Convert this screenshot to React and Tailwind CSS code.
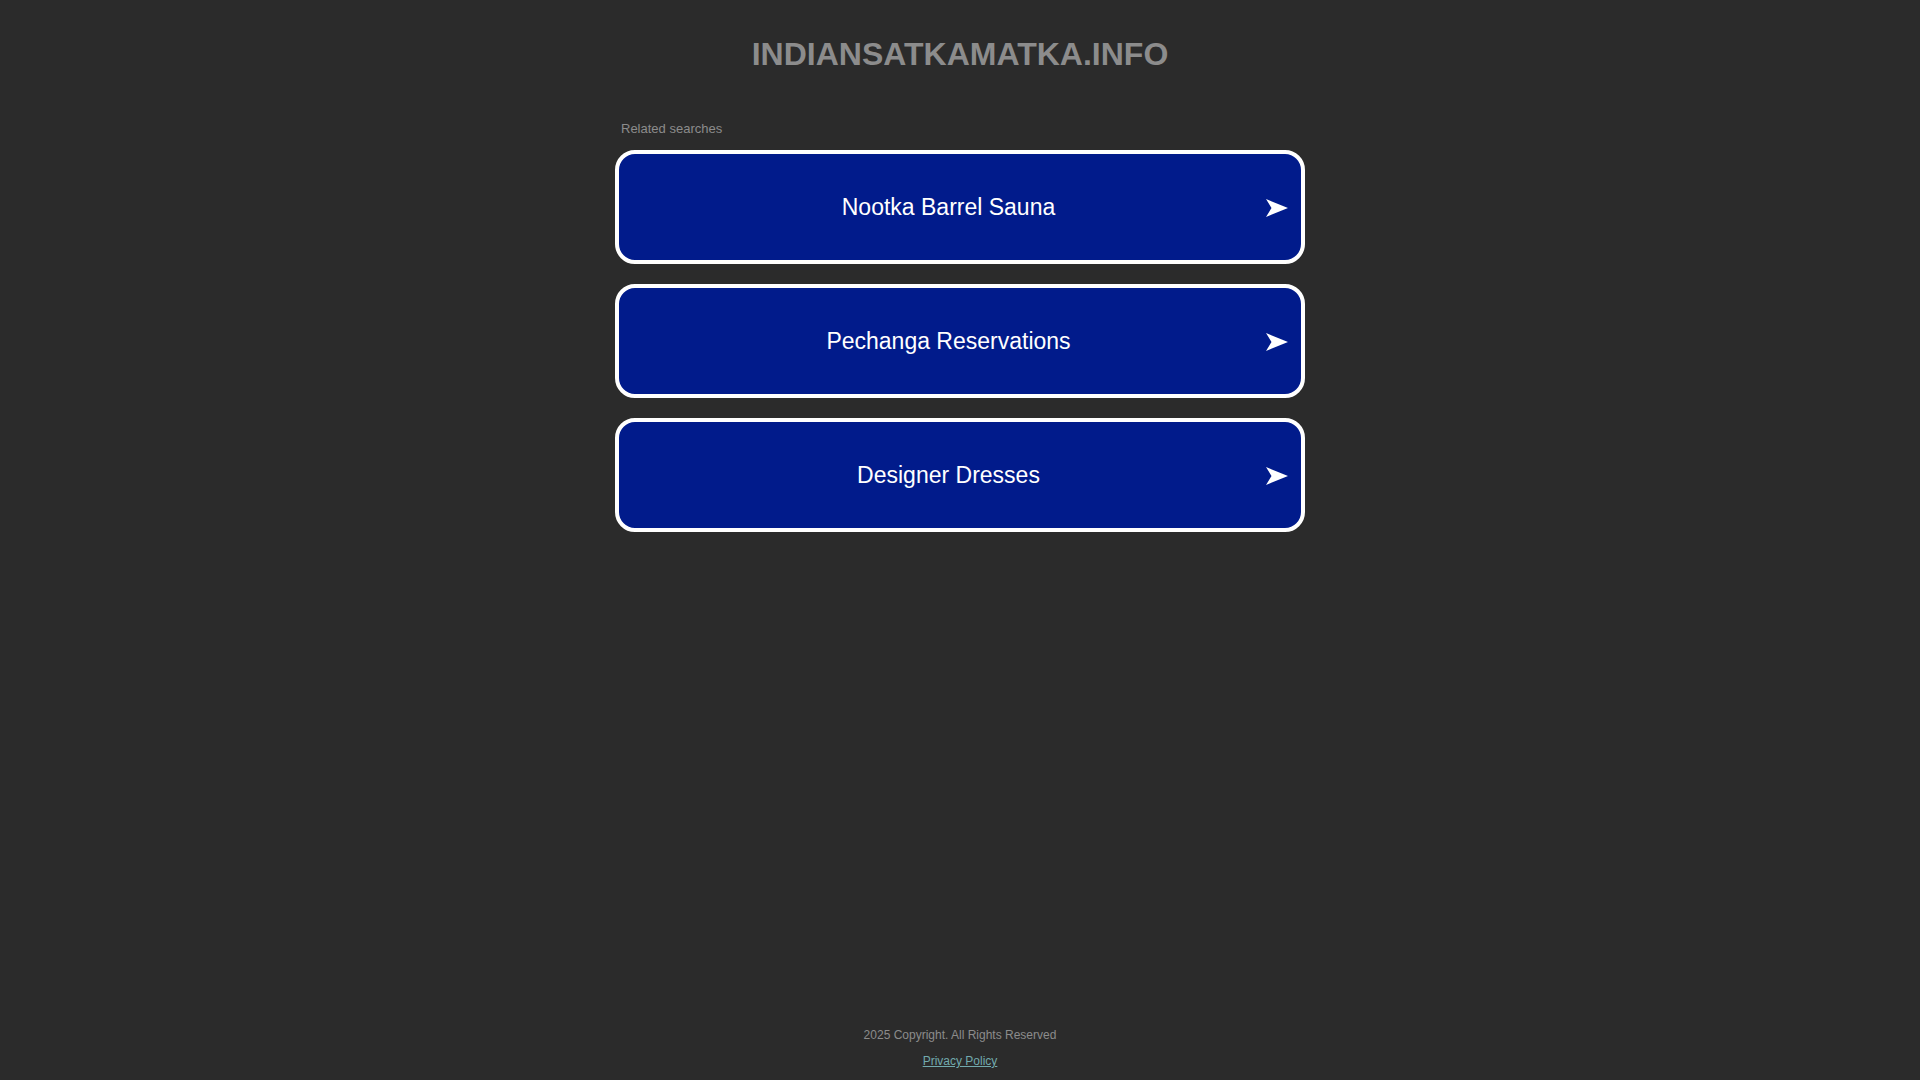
const searches = ['Nootka Barrel Sauna', 'Pechanga Reservations', 'Designer Dresses'];

function Arrow() {
  return (
    <svg className="h-[18px] w-[22px] shrink-0" viewBox="0 0 22 18" fill="#ffffff">
      <path d="M0 0 L22 9 L0 18 L5.5 9 Z" />
    </svg>
  );
}

export default function App() {
  return (
    <div
      className="flex min-h-screen flex-col bg-[#2b2b2b] text-[#8c8c8c]"
      style={{ fontFamily: '"Liberation Sans", Arial, sans-serif' }}
    >
      <header className="pt-[30px] text-center">
        <h1 className="text-[32px] font-bold leading-normal text-[#8c8c8c]">INDIANSATKAMATKA.INFO</h1>
      </header>

      <main className="mx-auto mt-[41px] w-[690px]">
        <p className="pl-[6px] text-[13px] leading-normal text-[#8c8c8c]">Related searches</p>
        <div className="mt-[11px] flex flex-col gap-[20px]">
          {searches.map((s) => (
            <a
              key={s}
              href="#"
              className="flex h-[114px] items-center rounded-[20px] border-4 border-white bg-[#011b8b] pl-[12px] pr-[13px] pt-[2px] text-white"
            >
              <span className="flex-1 text-center text-[23px] leading-normal">{s}</span>
              <Arrow />
            </a>
          ))}
        </div>
      </main>

      <footer className="mt-auto pb-[10px] text-center text-[12px] leading-normal">
        <p className="text-[#8c8c8c]">2025 Copyright. All Rights Reserved</p>
        <a href="#" className="mt-[8px] inline-block text-[#72aaae] underline">
          Privacy Policy
        </a>
      </footer>
    </div>
  );
}
